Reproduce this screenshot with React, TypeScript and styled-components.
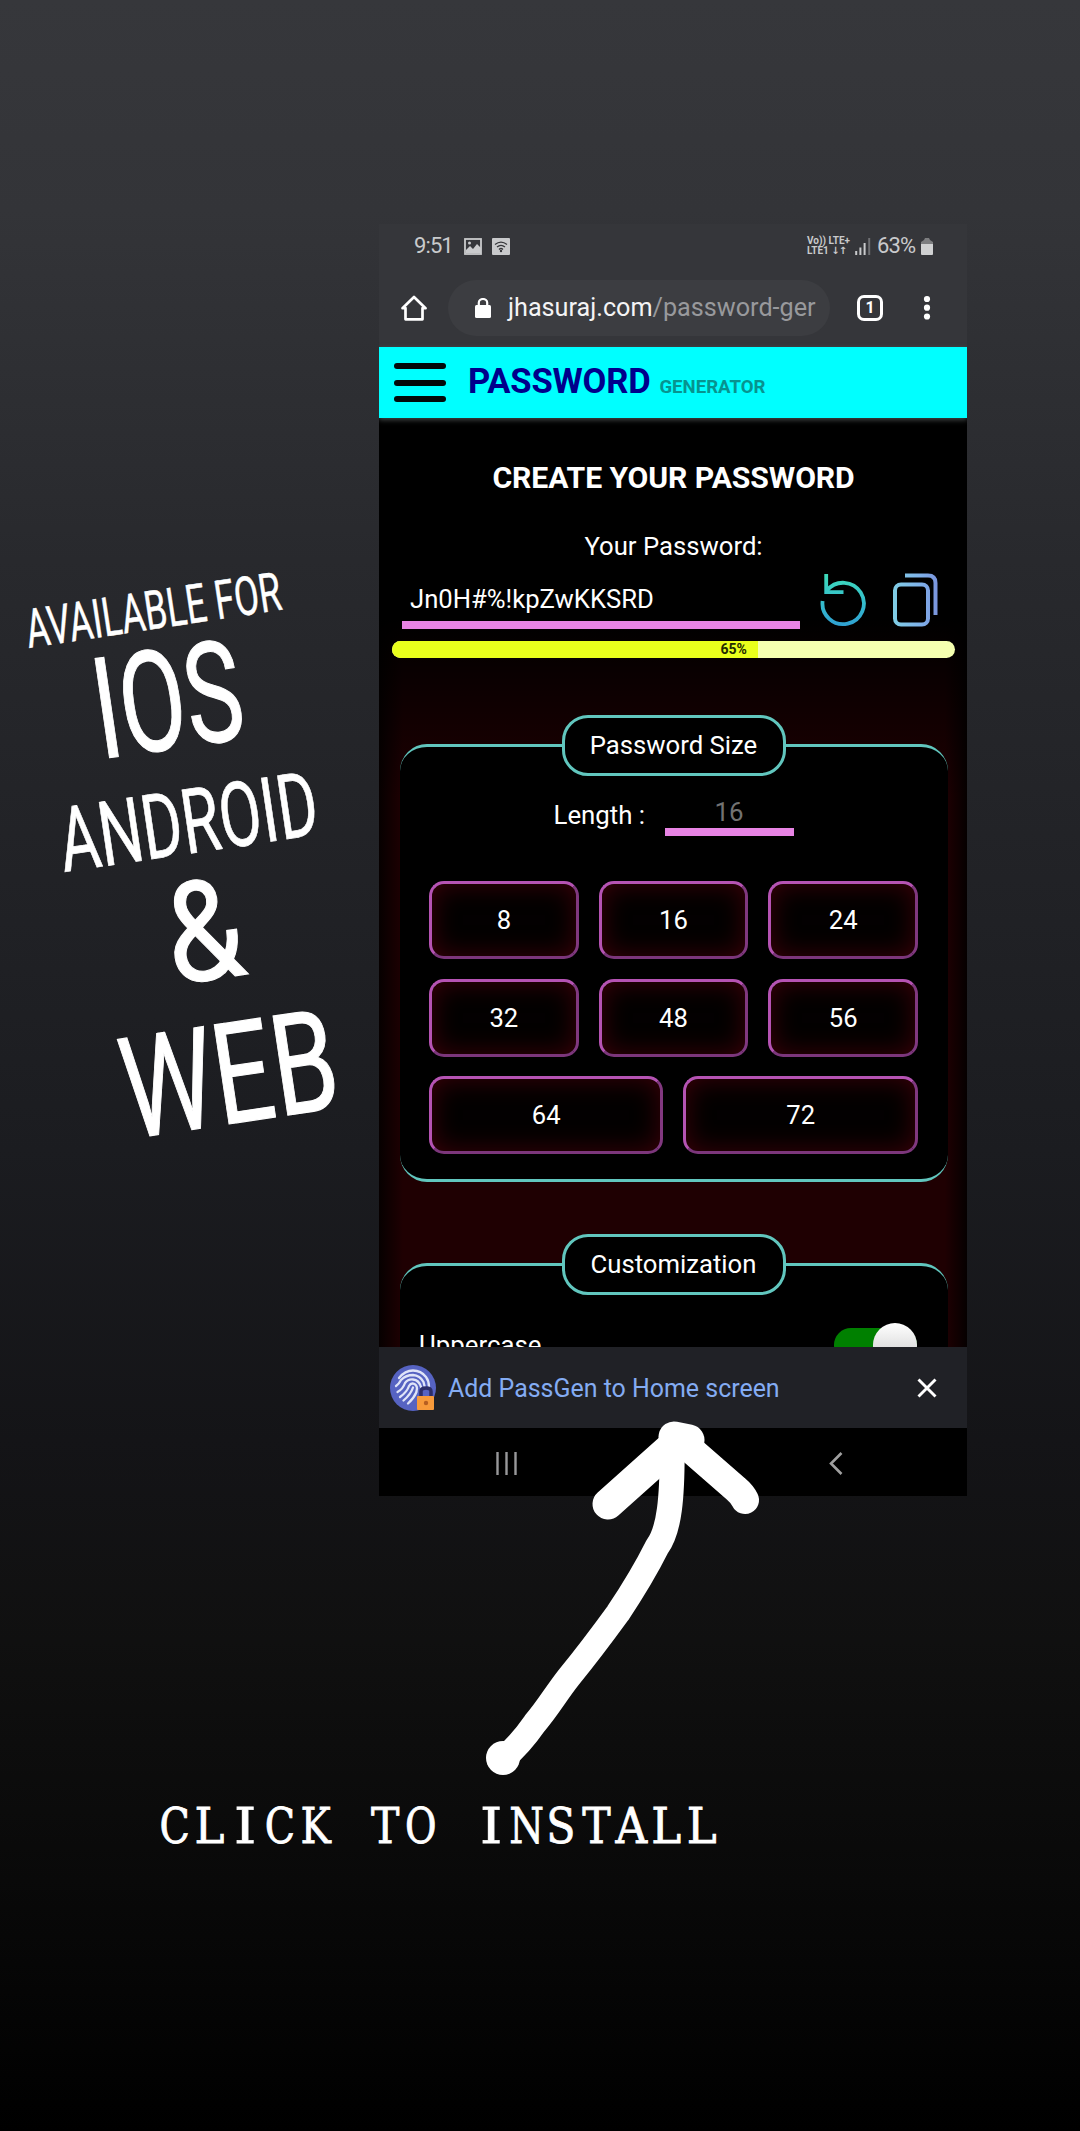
import React from 'react';
import styled, { createGlobalStyle } from 'styled-components';

const GlobalStyle = createGlobalStyle`
  *, *::before, *::after { box-sizing: border-box; }
  html, body { margin: 0; padding: 0; background: #000; }
  body { font-family: Roboto, "Liberation Sans", sans-serif; color: #fff; }
  button { font: inherit; color: inherit; padding: 0; margin: 0; }
  svg { display: block; flex: none; }
`;

const Story = styled.main`
  position: relative;
  width: 1080px;
  height: 2131px;
  overflow: hidden;
  display: grid;
  grid-template-columns: 379px 588px;
  grid-template-rows: 1272px auto;
  padding-top: 224px;
  background: linear-gradient(
    180deg,
    #36373b 0,
    #333438 210px,
    #28292d 560px,
    #1b1c20 1150px,
    #141417 1440px,
    #101010 1640px,
    #090909 1880px,
    #000 2131px
  );
`;

/* ---------- Tilted captions ---------- */

const Captions = styled.section`
  display: flex;
  flex-direction: column;
  align-items: flex-start;
  padding-top: 388px;
`;

const Caption = styled.div<{ $size: number; $left: number; $gap?: number; $squeeze: number; $tilt: number }>`
  margin-left: ${(p) => p.$left}px;
  margin-top: ${(p) => p.$gap ?? 0}px;
  font-size: ${(p) => p.$size}px;
  line-height: 0.683;
  white-space: nowrap;
  transform-origin: left bottom;
  transform: rotate(${(p) => -p.$tilt}deg) scaleX(${(p) => p.$squeeze});
  -webkit-text-stroke: ${(p) => p.$size * 0.008}px #fff;
`;

/* ---------- Phone ---------- */

const Phone = styled.section`
  display: flex;
  flex-direction: column;
  width: 588px;
  height: 1272px;
  overflow: hidden;
  background: #000;
`;

const BrowserChrome = styled.header`
  height: 123px;
  background: #35363a;
`;

const StatusBar = styled.div`
  display: flex;
  align-items: center;
  height: 56px;
  padding: 0 34px 12px 35px;
  color: #c9cacc;
  font-size: 22px;
  line-height: 26px;
`;

const Clock = styled.span`
  width: 47px;
  letter-spacing: -0.9px;
`;

const StatusIcons = styled.div`
  display: flex;
  gap: 10px;
  flex: 1;
  padding-left: 3px;
`;

const Carrier = styled.div`
  display: grid;
  width: 48px;
  font-size: 10px;
  font-weight: 700;
  line-height: 10px;
  white-space: pre;
`;

const DataArrows = styled.b`
  font-family: "DejaVu Sans", sans-serif;
  font-size: 10px;
  letter-spacing: -1px;
`;

const Battery = styled.span`
  width: 41px;
  margin: 0 3px 0 6px;
  letter-spacing: -0.9px;
`;

const Toolbar = styled.div`
  display: flex;
  align-items: center;
  height: 56px;
  padding-left: 22px;
`;

const AddressBar = styled.div`
  display: flex;
  align-items: center;
  width: 382px;
  height: 56px;
  margin: 0 27px 0 21px;
  padding-left: 27px;
  border-radius: 28px;
  background: #3c3d41;
  font-size: 25.2px;
  line-height: 30px;
  white-space: nowrap;
`;

const Url = styled.span`
  margin-left: 17px;
  color: #f4f4f5;
`;

const UrlPath = styled.span`
  color: #98999c;
`;

const TabCount = styled.div`
  width: 26px;
  height: 26px;
  margin-right: 40px;
  border: 3px solid #fff;
  border-radius: 7px;
  font-size: 16px;
  font-weight: 700;
  line-height: 20px;
  text-align: center;
`;

const AppBar = styled.div`
  display: flex;
  align-items: center;
  position: relative;
  z-index: 1;
  flex: none;
  height: 71px;
  padding-left: 15px;
  background: #00ffff;
  box-shadow: 0 2px 5px rgba(120, 130, 130, 0.55);
`;

const Menu = styled.div`
  display: grid;
  gap: 10.5px;
  width: 52px;
  margin-right: 22px;
`;

const MenuLine = styled.i`
  height: 6px;
  border-radius: 3px;
  background: #020a0a;
`;

const Brand = styled.div`
  display: flex;
  align-items: baseline;
  padding-top: 3px;
  color: #00008b;
  font-size: 34.6px;
  font-weight: 700;
  line-height: 40px;
  letter-spacing: -0.2px;
`;

const BrandSub = styled.span`
  margin-left: 9px;
  color: #07938f;
  font-size: 18.6px;
  letter-spacing: 0;
`;

const Content = styled.div`
  flex: none;
  height: 929px;
  overflow: hidden;
  padding: 0 12px 0 13px;
  background:
    linear-gradient(180deg, #000 0, #000 200px, rgba(0, 0, 0, 0) 380px),
    linear-gradient(90deg, #060000 0, rgba(6, 0, 0, 0) 24px, rgba(0, 0, 0, 0) 566px, #050000 100%),
    #1f0002;
`;

const Title = styled.h1`
  margin: 0;
  padding-top: 42px;
  font-size: 30.2px;
  font-weight: 700;
  line-height: 36px;
  letter-spacing: -0.1px;
  text-align: center;
`;

const FieldLabel = styled.div`
  margin-top: 34px;
  font-size: 25.7px;
  line-height: 32px;
  text-align: center;
`;

const PasswordRow = styled.div`
  display: flex;
  height: 67px;
  padding-left: 10px;
`;

const PasswordField = styled.div`
  width: 398px;
  height: 48px;
  margin: 19px 20px 0 0;
  padding: 0 8px;
  border-bottom: 8px solid #e884e4;
  font-size: 25.65px;
  line-height: 36px;
`;

const IconButton = styled.div<{ $gap?: number }>`
  margin-top: 11px;
  margin-right: ${(p) => p.$gap ?? 0}px;
`;

const Strength = styled.div`
  height: 17px;
  margin-top: 12px;
  border-radius: 9px;
  overflow: hidden;
  background: #f5ffb0;
`;

const StrengthFill = styled.div`
  width: 65%;
  height: 17px;
  padding-right: 11px;
  background: #e9ff1c;
  color: #222b00;
  font-size: 14px;
  font-weight: 700;
  line-height: 16px;
  text-align: right;
`;

const Panel = styled.section<{ $gap: number; $height: number }>`
  display: flex;
  flex-direction: column;
  align-items: center;
  height: ${(p) => p.$height}px;
  margin: ${(p) => p.$gap}px 7px 0 8px;
  border-top: 3px solid #61c6be;
  border-bottom: 3px solid #61c6be;
  border-radius: 27px;
  background: #000;
`;

const Legend = styled.h2`
  flex: none;
  width: 224px;
  height: 61px;
  margin: -32px 1px 0 0;
  border: 3px solid #61c6be;
  border-radius: 26px;
  background: #000;
  font-size: 25.7px;
  font-weight: 400;
  line-height: 54px;
  text-align: center;
`;

const LengthRow = styled.div`
  display: flex;
  width: 240px;
  height: 51px;
  margin: 9px 1px 0 0;
  justify-content: space-between;
  font-size: 25.8px;
  line-height: 61px;
`;

const LengthInput = styled.div`
  width: 129px;
  height: 51px;
  border-bottom: 8px solid #e884e4;
  color: #727272;
  line-height: 54px;
  text-align: center;
`;

const SizeGrid = styled.div`
  display: grid;
  grid-template-columns: repeat(12, 1fr);
  gap: 19.5px 20px;
  width: 489px;
  margin: 45px 1px 0 0;
`;

const SizeButton = styled.button<{ $span: number }>`
  grid-column: span ${(p) => p.$span};
  height: 78px;
  border: 3px solid;
  border-color: #b553b3 #81387f #7c367b #b553b3;
  border-radius: 15px;
  background: #030001;
  box-shadow: inset 0 0 26px #3c0008;
  font-size: 25.6px;
  line-height: 70px;
  text-align: center;
`;

const OptionRow = styled.div`
  display: flex;
  justify-content: space-between;
  align-items: center;
  width: 100%;
  height: 44px;
  margin-top: 28px;
  padding: 0 31px 0 19px;
  font-size: 25.8px;
`;

const Track = styled.div`
  display: flex;
  justify-content: flex-end;
  align-items: center;
  width: 83px;
  height: 34px;
  border-radius: 17px;
  background: #008000;
`;

const Thumb = styled.div`
  width: 44px;
  height: 44px;
  border-radius: 50%;
  background: linear-gradient(180deg, #fff, #dedede 60%);
`;

const InstallBar = styled.div`
  display: flex;
  align-items: center;
  flex: none;
  height: 81px;
  padding: 0 30px 0 11px;
  background: #202126;
  color: #84acf3;
  font-size: 24.95px;
`;

const InstallText = styled.span`
  flex: 1;
  margin-left: 11px;
  padding-top: 2px;
`;

const NavBar = styled.nav`
  display: flex;
  align-items: center;
  justify-content: space-between;
  height: 68px;
  padding: 2px 124px 0 117px;
`;

/* ---------- Call to action ---------- */

const Arrow = styled.svg`
  position: absolute;
  left: 470px;
  top: 1410px;
`;

const Footer = styled.footer`
  grid-column: 1 / -1;
  padding: 295px 0 0 157px;
  font-family: "DejaVu Serif", "Liberation Mono", serif;
  font-size: 48px;
  line-height: 70px;
  white-space: nowrap;
  -webkit-text-stroke: 0.8px #fff;
`;

const TypedText = styled.div`
  transform: scaleX(0.87);
  transform-origin: left center;
`;

const TypedLetter = styled.span<{ $stretch: number }>`
  display: inline-block;
  width: 40.4px;
  white-space: pre;
  text-align: center;
  transform: scaleX(${(p) => p.$stretch});
`;

/* Evens out the proportional letters so each fills its typewriter cell. */
const STRETCH: Record<string, number> = { I: 1.35, C: 0.95, K: 0.97, O: 0.92, N: 0.95, S: 1.02, A: 1.05, L: 1.08, T: 1.02 };

const SIZES: { value: number; span: number }[] = [
  { value: 8, span: 4 },
  { value: 16, span: 4 },
  { value: 24, span: 4 },
  { value: 32, span: 4 },
  { value: 48, span: 4 },
  { value: 56, span: 4 },
  { value: 64, span: 6 },
  { value: 72, span: 6 },
];

const PictureIcon = () => (
  <svg width="18" height="17" viewBox="0 0 18 17">
    <rect x="1" y="1" width="16" height="15" fill="none" stroke="#c9cacc" strokeWidth="1.8" />
    <path d="M2 15V12l4-4 3 3 4-5 4 4v5z" fill="#c9cacc" />
    <circle cx="5.5" cy="5" r="1.5" fill="#c9cacc" />
  </svg>
);

const WifiBoxIcon = () => (
  <svg width="18" height="17" viewBox="0 0 18 17">
    <rect width="18" height="17" rx="1" fill="#c9cacc" />
    <g fill="none" stroke="#35363a" strokeWidth="1.3">
      <path d="M3 6.6Q9 1.8 15 6.6M5 9.1Q9 5.7 13 9.1M7 11.4Q9 9.6 11 11.4" />
    </g>
    <circle cx="9" cy="13" r="1.2" fill="#35363a" />
  </svg>
);

const SignalIcon = () => (
  <svg width="16" height="17" viewBox="0 0 16 17">
    <path d="M1.2 13v4M5.4 9.5v7.5M9.6 5v12" stroke="#c9cacc" strokeWidth="2" />
    <path d="M14.2 0v17" stroke="#6f7073" strokeWidth="2" />
  </svg>
);

const BatteryIcon = () => (
  <svg width="12" height="17" viewBox="0 0 12 17">
    <path d="M4 0h4l1 2 3 2v3H0V4l3-2z" fill="#7d7e80" />
    <path d="M0 6h12v10q0 1-1 1H1q-1 0-1-1z" fill="#d0d1d2" />
  </svg>
);

const HomeIcon = () => (
  <svg width="26" height="26" viewBox="0 0 26 26">
    <path d="M1.5 13.2 13 2l11.500 11.200H21.500V24.300H4.500V13.200z" fill="none" stroke="#fff" strokeWidth="2.7" strokeLinejoin="round" />
  </svg>
);

const LockIcon = () => (
  <svg width="16" height="20" viewBox="0 0 16 20">
    <rect y="7" width="16" height="13" rx="1.5" fill="#fff" />
    <path d="M3.8 8V4.8a4.2 3.8 0 0 1 8.4 0V8" fill="none" stroke="#fff" strokeWidth="2.2" />
  </svg>
);

const DotsIcon = () => (
  <svg width="8" height="26" viewBox="0 0 8 26">
    <circle cx="4" cy="4" r="3.1" fill="#fff" />
    <circle cx="4" cy="12.7" r="3.1" fill="#fff" />
    <circle cx="4" cy="21.5" r="3.1" fill="#fff" />
  </svg>
);

const RefreshIcon = () => (
  <svg width="46" height="54" viewBox="0 0 46 54">
    <defs>
      <linearGradient id="refresh" x1="0" y1="0" x2="0" y2="54" gradientUnits="userSpaceOnUse">
        <stop offset="0" stopColor="#3fdcb8" />
        <stop offset="0.5" stopColor="#35c0cc" />
        <stop offset="1" stopColor="#2f9fd2" />
      </linearGradient>
    </defs>
    <g fill="none" stroke="url(#refresh)" strokeWidth="3.8">
      <path d="M2.600 28A20.700 20.700 0 1 0 7 17.500" />
      <path d="M6.200 1V19.200H23.500" />
    </g>
  </svg>
);

const CopyIcon = () => (
  <svg width="46" height="54" viewBox="0 0 46 54">
    <defs>
      <linearGradient id="copy" x1="0" y1="0" x2="46" y2="0" gradientUnits="userSpaceOnUse">
        <stop offset="0" stopColor="#80cfe4" />
        <stop offset="0.6" stopColor="#7fb2ea" />
        <stop offset="1" stopColor="#7a93dc" />
      </linearGradient>
    </defs>
    <g fill="none" stroke="url(#copy)" strokeWidth="4">
      <rect x="3" y="11.5" width="33" height="40" rx="6" />
      <path d="M13 2.500H36Q43.500 2.500 43.500 10V42" />
    </g>
  </svg>
);

const FingerprintIcon = () => (
  <svg width="47" height="48" viewBox="0 0 47 48">
    <circle cx="23" cy="24" r="23" fill="#5663c2" />
    <g fill="none" stroke="#dfe4f8" strokeWidth="2.3" strokeLinecap="round">
      <path d="M9 14Q15 6.500 23 6.500Q31 6.500 36 13Q39 17 39 23" />
      <path d="M6 22Q9 20 11 16Q16 11 23 11Q30 11.500 33.500 18L35 24" />
      <path d="M7.500 28Q13 25 15 19Q18 15 23 15.500Q29 16 31 23" />
      <path d="M10 33Q17 28 19 22Q21 18.500 24.500 20Q28 22 26.500 27" />
      <path d="M13.500 36.500Q21 30 23 23.500" />
      <path d="M18 39.500Q24 34 26.500 28" />
    </g>
    <path d="M31 33V27.500Q31 24 36 24Q41 24 41 27.500V33" fill="none" stroke="#2d2e68" strokeWidth="3.5" />
    <rect x="27" y="32" width="17" height="14" rx="1" fill="#f79a3b" />
    <circle cx="36" cy="39" r="2.2" fill="#b65e22" />
  </svg>
);

const CloseIcon = () => (
  <svg width="20" height="20" viewBox="0 0 20 20">
    <path d="M1.500 1.500 18.500 18.500M18.500 1.500 1.500 18.500" stroke="#fff" strokeWidth="2.9" />
  </svg>
);

const RecentsIcon = () => (
  <svg width="21" height="23" viewBox="0 0 21 23">
    <path d="M1.500 0v23M10.500 0v23M19.500 0v23" stroke="#98989a" strokeWidth="2.4" />
  </svg>
);

const BackIcon = () => (
  <svg width="14" height="23" viewBox="0 0 14 23">
    <path d="M12.500 1 2 11.500 12.500 22" fill="none" stroke="#a0a0a0" strokeWidth="2.6" />
  </svg>
);

export default function App() {
  return (
    <>
      <GlobalStyle />
      <Story>
        <Captions>
          <Caption $size={54} $left={29} $squeeze={0.665} $tilt={8.6}>AVAILABLE FOR</Caption>
          <Caption $size={141} $left={101} $gap={14.5} $squeeze={0.68} $tilt={8.3}>IOS</Caption>
          <Caption $size={90} $left={64} $gap={51} $squeeze={0.68} $tilt={8.4}>ANDROID</Caption>
          <Caption $size={140} $left={173} $gap={18} $squeeze={0.88} $tilt={8.4}>&amp;</Caption>
          <Caption $size={141} $left={129} $gap={57.5} $squeeze={0.74} $tilt={8.5}>WEB</Caption>
        </Captions>

        <Phone>
          <BrowserChrome>
            <StatusBar>
              <Clock>9:51</Clock>
              <StatusIcons>
                <PictureIcon />
                <WifiBoxIcon />
              </StatusIcons>
              <Carrier>
                <span>Vo)) LTE+</span>
                <span>LTE1 <DataArrows>↓↑</DataArrows></span>
              </Carrier>
              <SignalIcon />
              <Battery>63%</Battery>
              <BatteryIcon />
            </StatusBar>
            <Toolbar>
              <HomeIcon />
              <AddressBar>
                <LockIcon />
                <Url>jhasuraj.com<UrlPath>/password-ger</UrlPath></Url>
              </AddressBar>
              <TabCount>1</TabCount>
              <DotsIcon />
            </Toolbar>
          </BrowserChrome>

          <AppBar>
            <Menu>
              <MenuLine />
              <MenuLine />
              <MenuLine />
            </Menu>
            <Brand>
              PASSWORD<BrandSub>GENERATOR</BrandSub>
            </Brand>
          </AppBar>

          <Content>
            <Title>CREATE YOUR PASSWORD</Title>
            <FieldLabel>Your Password:</FieldLabel>
            <PasswordRow>
              <PasswordField>Jn0H#%!kpZwKKSRD</PasswordField>
              <IconButton $gap={26}><RefreshIcon /></IconButton>
              <IconButton><CopyIcon /></IconButton>
            </PasswordRow>
            <Strength>
              <StrengthFill>65%</StrengthFill>
            </Strength>

            <Panel $gap={86} $height={438}>
              <Legend>Password Size</Legend>
              <LengthRow>
                <span>Length :</span>
                <LengthInput>16</LengthInput>
              </LengthRow>
              <SizeGrid>
                {SIZES.map(({ value, span }) => (
                  <SizeButton key={value} $span={span}>{value}</SizeButton>
                ))}
              </SizeGrid>
            </Panel>

            <Panel $gap={81} $height={300}>
              <Legend>Customization</Legend>
              <OptionRow>
                <span>Uppercase</span>
                <Track><Thumb /></Track>
              </OptionRow>
            </Panel>
          </Content>

          <InstallBar>
            <FingerprintIcon />
            <InstallText>Add PassGen to Home screen</InstallText>
            <CloseIcon />
          </InstallBar>
          <NavBar>
            <RecentsIcon />
            <BackIcon />
          </NavBar>
        </Phone>

        <Footer>
          <TypedText>
            {Array.from('CLICK TO INSTALL').map((letter, i) => (
              <TypedLetter key={i} $stretch={STRETCH[letter] ?? 1}>{letter}</TypedLetter>
            ))}
          </TypedText>
        </Footer>

        <Arrow width="310" height="380" viewBox="470 1410 310 380">
          <g fill="none" stroke="#fff" strokeLinecap="round" strokeLinejoin="round">
            <path
              d="M503 1759C516 1748 526 1736 535 1723C548 1708 557 1692 569 1677C587 1655 602 1635 618 1613C632 1592 646 1569 657 1547C669 1531 673 1500 672 1437"
              strokeWidth="25"
            />
            <path d="M608 1504L674 1445" strokeWidth="31" />
            <path d="M689 1448L736 1489Q742 1494 745 1500" strokeWidth="28" />
            <path d="M674 1437L689 1440" strokeWidth="31" />
          </g>
          <circle cx="503" cy="1758" r="17" fill="#fff" />
        </Arrow>
      </Story>
    </>
  );
}
